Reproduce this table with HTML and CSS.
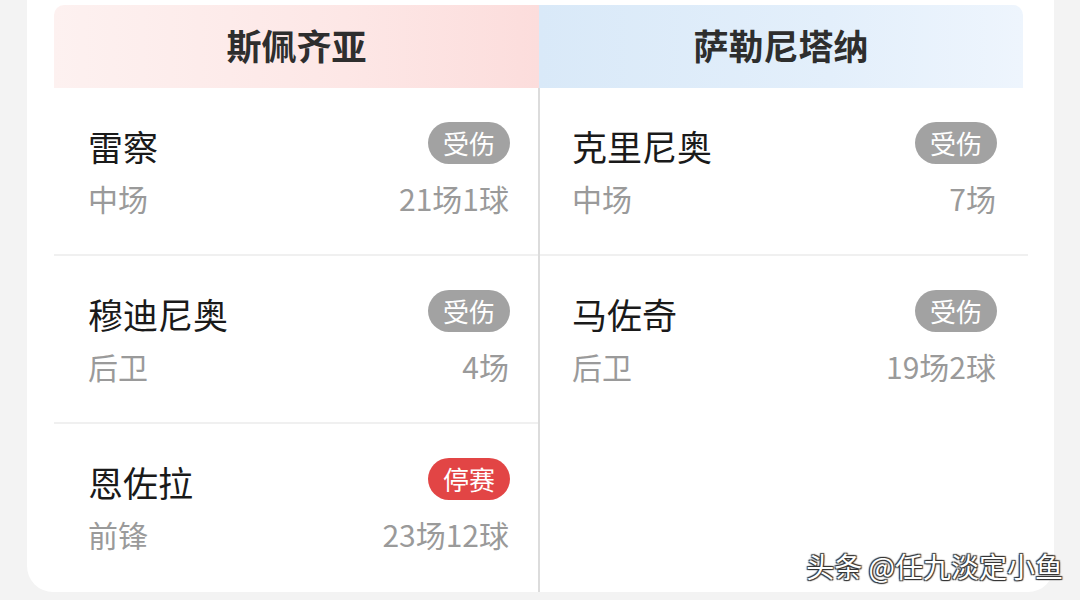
FILE: index.html
```html
<!DOCTYPE html>
<html lang="zh">
<head>
<meta charset="utf-8">
<link rel="stylesheet" href="styles.css">
</head>
<body>
<div class="card">
  <div class="heads">
    <div class="head head-home">斯佩齐亚</div>
    <div class="head head-away">萨勒尼塔纳</div>
  </div>
  <div class="cols">
    <div class="col col-left">
      <div class="row">
        <div class="line"><span class="name">雷察</span><span class="badge">受伤</span></div>
        <div class="line"><span class="pos">中场</span><span class="stat">21场1球</span></div>
      </div>
      <div class="row">
        <div class="line"><span class="name">穆迪尼奥</span><span class="badge">受伤</span></div>
        <div class="line"><span class="pos">后卫</span><span class="stat">4场</span></div>
      </div>
      <div class="row last">
        <div class="line"><span class="name">恩佐拉</span><span class="badge red">停赛</span></div>
        <div class="line"><span class="pos">前锋</span><span class="stat">23场12球</span></div>
      </div>
    </div>
    <div class="col col-right">
      <div class="row">
        <div class="line"><span class="name">克里尼奥</span><span class="badge">受伤</span></div>
        <div class="line"><span class="pos">中场</span><span class="stat">7场</span></div>
      </div>
      <div class="row last">
        <div class="line"><span class="name">马佐奇</span><span class="badge">受伤</span></div>
        <div class="line"><span class="pos">后卫</span><span class="stat">19场2球</span></div>
      </div>
    </div>
  </div>
  <div class="mark">头条 @任九淡定小鱼</div>
</div>
</body>
</html>
```

FILE: styles.css
```css
html, body {
  margin: 0;
  padding: 0;
}
body {
  width: 1080px;
  height: 600px;
  overflow: hidden;
  background: #f3f3f3;
  font-family: "Noto Sans CJK SC", "Noto Sans", sans-serif;
}
.card {
  position: relative;
  margin-left: 27px;
  width: 1027px;
  height: 592px;
  box-sizing: border-box;
  padding: 5px 26px 0 27px;
  background: #ffffff;
  border-radius: 0 0 26px 26px;
}
.heads {
  display: flex;
  height: 83px;
}
.head {
  display: flex;
  align-items: center;
  justify-content: center;
  font-size: 35px;
  font-weight: 700;
  color: #2e2e2e;
  padding-bottom: 4px;
  box-sizing: border-box;
}
.head-home {
  width: 485px;
  background: linear-gradient(90deg, #fdf1f0 0%, #fde7e6 60%, #fcdddc 100%);
  border-radius: 10px 0 0 0;
}
.head-away {
  width: 484px;
  background: linear-gradient(90deg, #d9e9f8 0%, #e3effb 60%, #eef5fd 100%);
  border-radius: 0 10px 0 0;
}
.cols {
  display: flex;
  height: 504px;
}
.col-left {
  width: 484px;
}
.col-right {
  width: 488px;
  border-left: 2px solid #dcdcdc;
}
.row {
  height: 168px;
  box-sizing: border-box;
  border-bottom: 2px solid #f0f0f0;
  padding-top: 37px;
  display: flex;
  flex-direction: column;
  gap: 10px;
}
.row.last {
  border-bottom: none;
}
.col-left .row {
  padding-left: 34px;
  padding-right: 28px;
}
.col-right .row {
  padding-left: 32px;
  padding-right: 31px;
}
.line {
  height: 42px;
  display: flex;
  align-items: center;
  justify-content: space-between;
}
.name {
  font-size: 35px;
  color: #1a1a1a;
  line-height: 42px;
}
.pos, .stat {
  font-size: 30px;
  color: #9a9a9a;
  line-height: 42px;
}
.stat {
  padding-right: 1px;
}
.badge {
  height: 42px;
  line-height: 42px;
  padding: 0 15px;
  margin-bottom: 6px;
  border-radius: 21px;
  background: #a2a2a2;
  color: #ffffff;
  font-size: 26px;
}
.badge.red {
  background: #e24545;
}
.mark {
  position: absolute;
  right: -9px;
  bottom: 6px;
  font-size: 28px;
  color: #ffffff;
  white-space: nowrap;
  text-shadow: -1px -1px 1px #333, 1px 1px 1px #333, 1px -1px 1px #333, -1px 1px 1px #333;
}
```
